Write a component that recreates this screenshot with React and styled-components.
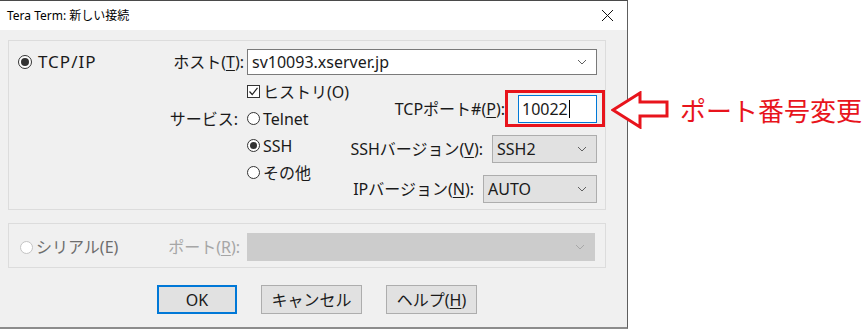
import styled, { createGlobalStyle } from "styled-components";

const GlobalStyle = createGlobalStyle`
  body {
    margin: 0;
    background: #fff;
    font-family: "Noto Sans", "Noto Sans CJK JP", sans-serif;
    color: #1a1a1a;
  }
`;

const Chevron = ({ color = "#606060" }) => (
  <svg width="10" height="6" viewBox="0 0 10 6">
    <polyline points="1,1 5,5 9,1" fill="none" stroke={color} strokeWidth="1" />
  </svg>
);

const Radio = ({ checked, disabled, children, dim, wide }) => (
  <Option $dim={dim} $wide={wide}>
    <Circle $checked={checked} $disabled={disabled} $wide={wide} />
    {children}
  </Option>
);

const App = () => {
  return (
    <Page>
      <GlobalStyle />
      <Dialog>
        <TitleBar>
          <span>Tera Term: 新しい接続</span>
          <svg width="13" height="13" viewBox="0 0 13 13">
            <path d="M1 1 L12 12 M12 1 L1 12" stroke="#111" strokeWidth="1" />
          </svg>
        </TitleBar>

        <Body>
          <GroupBox $pad="8px 8px 6px 9px" $align="flex-start">
            <LeftCol $h="26px">
              <Radio checked wide>
                TCP/IP
              </Radio>
            </LeftCol>
            <Main>
              <LabelGrid>
                <Label>
                  ホスト(<U>T</U>):
                </Label>
                <Combo $variant="edit">
                  <span>sv10093.xserver.jp</span>
                  <Chevron />
                </Combo>
              </LabelGrid>

              <Lower>
                <ServiceGrid>
                  <span />
                  <Option>
                    <Box>
                      <svg width="11" height="11" viewBox="0 0 11 11">
                        <polyline
                          points="1.5,5.5 4.2,8.5 9.5,1.8"
                          fill="none"
                          stroke="#222"
                          strokeWidth="1.2"
                        />
                      </svg>
                    </Box>
                    ヒストリ(O)
                  </Option>
                  <Label $pr="6px">サービス:</Label>
                  <Radio>Telnet</Radio>
                  <span />
                  <Radio checked>SSH</Radio>
                  <span />
                  <Radio>その他</Radio>
                </ServiceGrid>

                <FieldStack>
                  <FieldRow $gap="13px">
                    <span>
                      TCPポート#(<U>P</U>):
                    </span>
                    <InputWrap>
                      <PortInput>
                        <Caret>10022</Caret>
                      </PortInput>
                      <Highlight />
                    </InputWrap>
                  </FieldRow>
                  <FieldRow $gap="9px">
                    <span>
                      SSHバージョン(<U>V</U>):
                    </span>
                    <Combo $variant="button" $w="105px" $h="28px">
                      <span>SSH2</span>
                      <Chevron />
                    </Combo>
                  </FieldRow>
                  <FieldRow $gap="9px">
                    <span>
                      IPバージョン(<U>N</U>):
                    </span>
                    <Combo $variant="button" $w="114px" $h="28px">
                      <span>AUTO</span>
                      <Chevron />
                    </Combo>
                  </FieldRow>
                </FieldStack>
              </Lower>
            </Main>
          </GroupBox>

          <GroupBox $pad="9px 10px 6px 11px" $align="center" $mt="13px">
            <LeftCol $h="28px" $w="138px">
              <Radio disabled dim>
                シリアル(E)
              </Radio>
            </LeftCol>
            <Main>
              <LabelGrid>
                <Label $disabled $pr="4px">
                  ポート(<U>R</U>):
                </Label>
                <Combo $variant="disabled" $h="28px">
                  <span />
                  <Chevron color="#a8a8a8" />
                </Combo>
              </LabelGrid>
            </Main>
          </GroupBox>

          <ButtonRow>
            <Button $default $w="80px">
              OK
            </Button>
            <Button $w="101px">キャンセル</Button>
            <Button $w="91px">
              ヘルプ(<U>H</U>)
            </Button>
          </ButtonRow>
        </Body>
      </Dialog>

      <Annotation>
        <svg width="58" height="38" viewBox="0 0 58 38">
          <polygon
            points="2,19 29,2 29,11 56,11 56,25 29,25 29,36"
            fill="#fff"
            stroke="#e8141c"
            strokeWidth="3"
            strokeLinejoin="miter"
          />
        </svg>
        <Note>ポート番号変更</Note>
      </Annotation>
    </Page>
  );
};

export default App;

const Page = styled.div`
  width: 867px;
  height: 334px;
  display: flex;
  align-items: flex-start;
  overflow: hidden;
`;

const Dialog = styled.div`
  width: 628px;
  box-sizing: border-box;
  background: #f0f0f0;
  border-top: 1px solid #4a4a4a;
  border-right: 1px solid #5e5e5e;
  border-bottom: 2px solid #8c8c8c;
  font-size: 16px;
  line-height: 20px;
`;

const TitleBar = styled.div`
  height: 29px;
  background: #fff;
  display: flex;
  align-items: center;
  justify-content: space-between;
  padding: 0 13px 0 7px;
  font-size: 12px;
  color: #000;
`;

const Body = styled.div`
  padding: 10px 21px 13px 8px;
`;

const GroupBox = styled.div`
  width: 598px;
  box-sizing: border-box;
  border: 1px solid #dcdcdc;
  display: flex;
  align-items: ${(p) => p.$align};
  padding: ${(p) => p.$pad};
  margin-top: ${(p) => p.$mt || "0"};
`;

const LeftCol = styled.div`
  width: ${(p) => p.$w || "140px"};
  height: ${(p) => p.$h};
  display: flex;
  align-items: center;
  flex-shrink: 0;
`;

const Main = styled.div`
  flex: 1;
  display: flex;
  flex-direction: column;
`;

const LabelGrid = styled.div`
  display: grid;
  grid-template-columns: 86px 1fr;
  column-gap: 3px;
  align-items: center;
`;

const Label = styled.span`
  text-align: right;
  white-space: nowrap;
  padding-right: ${(p) => p.$pr || "0"};
  color: ${(p) => (p.$disabled ? "#a6a6a6" : "inherit")};
`;

const U = styled.span`
  text-decoration: underline;
  text-underline-offset: 2px;
`;

const Combo = styled.div`
  height: ${(p) => p.$h || "26px"};
  width: ${(p) => p.$w || "auto"};
  box-sizing: border-box;
  display: flex;
  align-items: center;
  justify-content: space-between;
  padding: 0 9px 0 4px;
  background: ${(p) =>
    p.$variant === "edit" ? "#fff" : p.$variant === "disabled" ? "#cccccc" : "#e1e1e1"};
  border: 1px solid
    ${(p) =>
      p.$variant === "edit" ? "#7a7a7a" : p.$variant === "disabled" ? "#cccccc" : "#adadad"};
`;

const Lower = styled.div`
  display: flex;
  justify-content: space-between;
  align-items: flex-start;
`;

const ServiceGrid = styled.div`
  display: grid;
  grid-template-columns: 86px auto;
  column-gap: 3px;
  grid-auto-rows: 27px;
  align-items: center;
  margin-top: 3px;
`;

const Option = styled.span`
  display: inline-flex;
  align-items: center;
  gap: ${(p) => (p.$wide ? "6px" : "3px")};
  white-space: nowrap;
  font-size: ${(p) => (p.$wide ? "17px" : "inherit")};
  letter-spacing: ${(p) => (p.$wide ? "1px" : "normal")};
  color: ${(p) => (p.$dim ? "#6d6d6d" : "inherit")};
`;

const Circle = styled.span`
  position: relative;
  width: ${(p) => (p.$wide ? "14px" : "13px")};
  height: ${(p) => (p.$wide ? "14px" : "13px")};
  box-sizing: border-box;
  border-radius: 50%;
  border: 1px solid ${(p) => (p.$disabled ? "#c4c4c4" : "#333")};
  background: #fff;
  flex-shrink: 0;

  &::after {
    content: "";
    display: ${(p) => (p.$checked ? "block" : "none")};
    position: absolute;
    left: 2px;
    top: 2px;
    width: ${(p) => (p.$wide ? "8px" : "7px")};
    height: ${(p) => (p.$wide ? "8px" : "7px")};
    border-radius: 50%;
    background: #333;
  }
`;

const Box = styled.span`
  width: 13px;
  height: 13px;
  box-sizing: border-box;
  border: 1px solid #333;
  background: #fff;
  display: flex;
  align-items: center;
  justify-content: center;
  flex-shrink: 0;
`;

const FieldStack = styled.div`
  display: flex;
  flex-direction: column;
  align-items: flex-end;
  gap: 12px;
  margin-top: 20px;
`;

const FieldRow = styled.div`
  display: flex;
  align-items: center;
  gap: ${(p) => p.$gap};
  white-space: nowrap;
`;

const InputWrap = styled.div`
  position: relative;
`;

const PortInput = styled.div`
  width: 79px;
  height: 28px;
  box-sizing: border-box;
  border: 1px solid #0078d7;
  background: #fff;
  display: flex;
  align-items: center;
  padding-left: 3px;
`;

const Caret = styled.span`
  border-right: 1px solid #000;
  padding-right: 1px;
  line-height: 18px;
`;

const Highlight = styled.div`
  position: absolute;
  top: -5px;
  left: -13px;
  right: -8px;
  bottom: -4px;
  border: 3px solid #e8141c;
  pointer-events: none;
`;

const ButtonRow = styled.div`
  display: flex;
  gap: 24px;
  margin-top: 17px;
  padding-left: 149px;
`;

const Button = styled.div`
  width: ${(p) => p.$w};
  height: 29px;
  box-sizing: border-box;
  display: flex;
  align-items: center;
  justify-content: center;
  background: #e1e1e1;
  border: 1px solid ${(p) => (p.$default ? "#0078d7" : "#adadad")};
  box-shadow: ${(p) => (p.$default ? "inset 0 0 0 1px #0078d7" : "none")};
`;

const Annotation = styled.div`
  display: flex;
  align-items: center;
  gap: 11px;
  margin-top: 91px;
  margin-left: -17px;
`;

const Note = styled.span`
  font-family: "Noto Sans CJK JP", sans-serif;
  font-size: 26px;
  line-height: 30px;
  color: #e8141c;
  white-space: nowrap;
`;
